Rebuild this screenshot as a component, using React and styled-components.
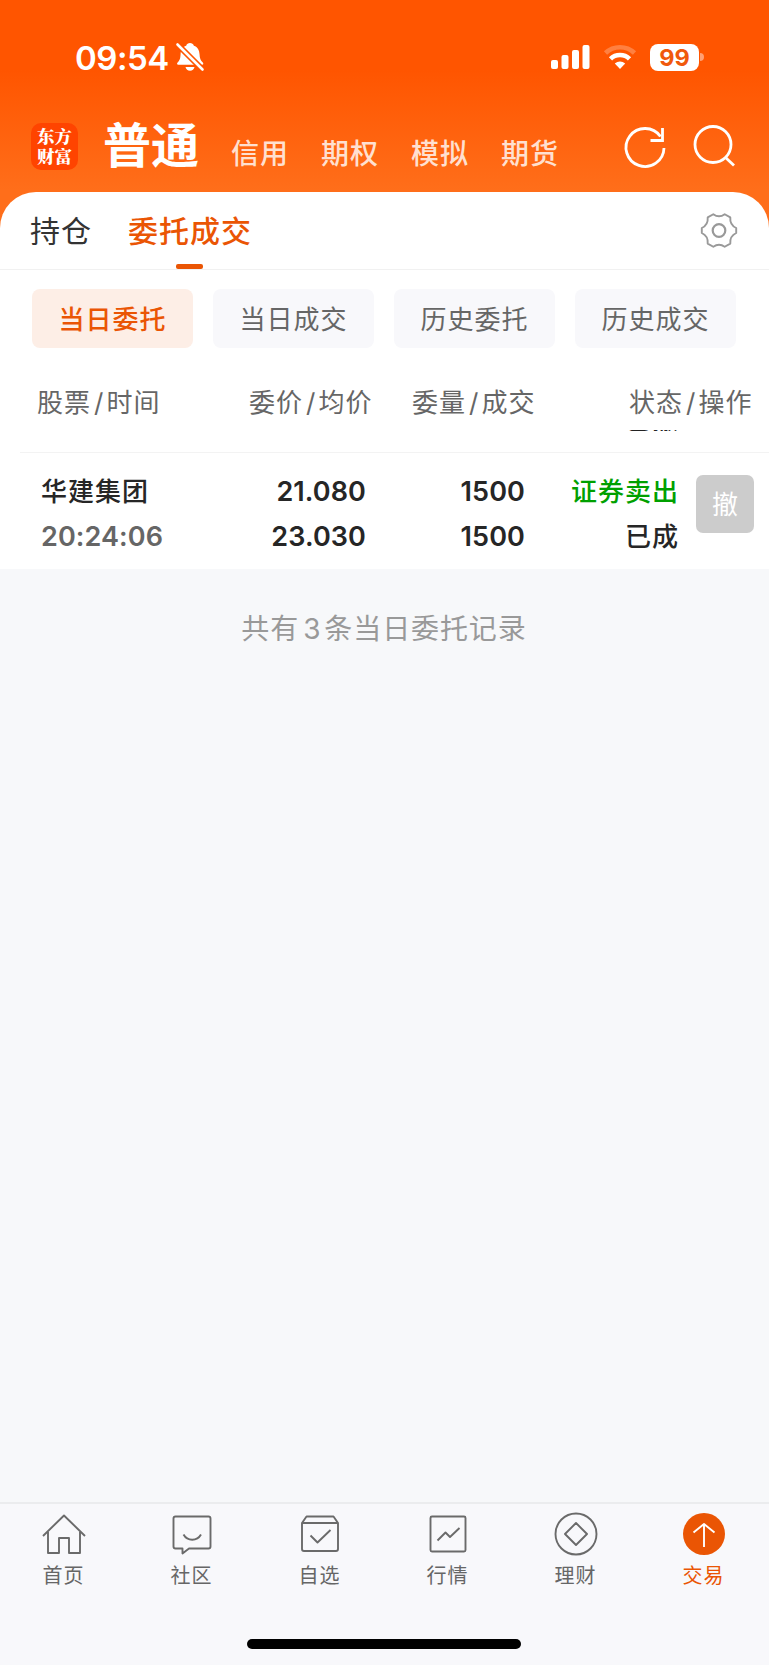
import React from 'react';
import styled, { createGlobalStyle } from 'styled-components';

// Global styles
const GlobalStyle = createGlobalStyle`
  * {
    box-sizing: border-box;
  }
  body {
    margin: 0;
    background-color: #f7f8fa;
    font-family: Inter, 'Noto Sans CJK SC', sans-serif;
  }
  svg {
    display: block;
    overflow: visible;
  }
`;

// Styled components
const Screen = styled.div`
  width: 769px;
  height: 1665px;
  display: flex;
  flex-direction: column;
  overflow: hidden;
  background: #f7f8fa;
`;

const Hero = styled.header`
  height: 240px;
  flex: none;
  background: linear-gradient(#ff5500 0, #ff5500 70px, #ff6e1a 190px);
  color: #fff;
`;

const StatusBar = styled.div`
  height: 114px;
  padding: 0 65px 0 75px;
  display: flex;
  align-items: center;
`;

const Time = styled.span`
  font-size: 33px;
  font-weight: 600;
  line-height: 40px;
  letter-spacing: -0.5px;
  width: 101px;
  padding-top: 1px;
  white-space: nowrap;
`;

const StatusRight = styled.div`
  margin-left: auto;
  display: flex;
  align-items: center;
  gap: 13px;
`;

const Battery = styled.div`
  width: 49px;
  height: 27px;
  border-radius: 8px;
  background: #fff;
  color: #f0590c;
  font-size: 23.5px;
  font-weight: 650;
  line-height: 27px;
  text-align: center;
`;

const BatteryWrap = styled.div`
  display: flex;
  align-items: center;
  gap: 1px;
`;

const BatteryNub = styled.div`
  width: 4px;
  height: 8px;
  border-radius: 0 4px 4px 0;
  background: #ffa074;
`;

const AccountBar = styled.nav`
  height: 78px;
  padding: 0 31px;
  display: flex;
  align-items: flex-start;
`;

const Logo = styled.div`
  width: 47px;
  height: 47px;
  margin: 9px 25px 0 0;
  padding-top: 3px;
  border-radius: 10px;
  background: #ff4400;
  font-family: 'Noto Serif CJK SC', 'Noto Sans CJK SC', serif;
  font-size: 17.5px;
  font-weight: 900;
  line-height: 20px;
  text-align: center;
`;

const AccountTitle = styled.span`
  font-size: 48px;
  font-weight: 700;
  line-height: 60px;
  margin: 2px 32px 0 0;
`;

const AccountTab = styled.span`
  width: 90px;
  margin-top: 20px;
  font-size: 28px;
  font-weight: 500;
  line-height: 40px;
  letter-spacing: 1px;
  color: #ffe0d0;
`;

const HeaderIcons = styled.div`
  margin: 8px 2px 0 auto;
  display: flex;
  gap: 25px;
`;

const Sheet = styled.main`
  flex: none;
  margin-top: -48px;
  background: #fff;
  border-radius: 36px 36px 0 0;
`;

const TabRow = styled.div`
  height: 78px;
  padding: 0 31px 0 30px;
  display: flex;
  align-items: stretch;
  gap: 36px;
  border-bottom: 1px solid #f1f1f1;
`;

const Tab = styled.div`
  display: flex;
  flex-direction: column;
  align-items: center;
  justify-content: space-between;
  padding-top: 18px;
  font-size: 30px;
  line-height: 42px;
  letter-spacing: 1px;
  font-weight: ${props => (props.$active ? 500 : 400)};
  color: ${props => (props.$active ? '#ea5504' : '#333')};
`;

const TabMark = styled.div`
  width: 27px;
  height: 5px;
  margin-right: 1px;
  border-radius: 2px;
  background: #ea5504;
`;

const Settings = styled.div`
  margin: 20px 0 0 auto;
`;

const FilterRow = styled.div`
  padding: 19px 33px 0 32px;
  display: grid;
  grid-template-columns: repeat(4, 1fr);
  gap: 20px;
`;

const Filter = styled.div`
  height: 59px;
  border-radius: 8px;
  font-size: 26px;
  line-height: 61px;
  letter-spacing: 1px;
  text-align: center;
  font-weight: ${props => (props.$active ? 500 : 400)};
  color: ${props => (props.$active ? '#ea5504' : '#666')};
  background: ${props => (props.$active ? '#fdeee6' : '#f8f8fb')};
`;

const TableHead = styled.div`
  height: 81px;
  padding: 35px 17px 0 37px;
  display: grid;
  grid-template-columns: 212px 163px 217px 1fr;
  font-size: 26px;
  line-height: 40px;
  letter-spacing: 1px;
  color: #666;
  white-space: nowrap;
`;

const Slash = styled.span`
  margin: 0 2px 0 3px;
`;

// Only the bottom edge of the previous order is still visible
const ScrolledRow = styled.div`
  height: 24px;
  margin-left: 20px;
  padding: 1px 90px 0 0;
  border-bottom: 1px solid #f3f3f3;
`;

const ScrolledStatus = styled.div`
  height: 1px;
  display: flex;
  justify-content: flex-end;
  align-items: flex-end;
  overflow: hidden;
  font-size: 26px;
  font-weight: 500;
  line-height: 22px;
  letter-spacing: 1px;
  color: #222;
`;

const OrderRow = styled.div`
  height: 116px;
  padding: 16px 15px 0 41px;
  display: grid;
  grid-template-columns: 160px 165px 159px 154px 1fr;
`;

const Cell = styled.div`
  display: flex;
  flex-direction: column;
  text-align: ${props => props.$align || 'right'};
  font-size: 27px;
  font-weight: 600;
  line-height: 45px;
  letter-spacing: 0.1px;
  color: #262626;
  white-space: nowrap;
`;

const Cn = styled.span`
  font-size: 26px;
  font-weight: 500;
  letter-spacing: 1px;
  color: ${props => props.$color || '#262626'};
`;

const OrderTime = styled.span`
  font-weight: 600;
  letter-spacing: 0.1px;
  color: #666;
`;

const CancelButton = styled.button`
  width: 58px;
  height: 58px;
  margin: 6px 0 0 auto;
  padding: 2px 0 0;
  border: none;
  border-radius: 7px;
  background: #ccc;
  color: #fff;
  font-family: inherit;
  font-size: 26px;
  line-height: 56px;
`;

const Summary = styled.p`
  flex: 1;
  margin: 0;
  padding: 39px 1px 0 0;
  font-size: 28px;
  line-height: 42px;
  letter-spacing: 0.9px;
  text-align: center;
  color: #999;
`;

const Count = styled.span`
  margin: 0 3px 0 4px;
`;

const BottomNav = styled.nav`
  height: 163px;
  flex: none;
  display: flex;
  flex-direction: column;
  align-items: center;
  justify-content: space-between;
  padding-bottom: 16px;
  border-top: 2px solid #ebecee;
  background: #f8f8fb;
`;

const NavItems = styled.div`
  width: 100%;
  display: grid;
  grid-template-columns: repeat(6, 128px);
`;

const NavItem = styled.div`
  display: flex;
  flex-direction: column;
  align-items: center;
  padding-top: 8px;
  font-size: 20px;
  line-height: 30px;
  letter-spacing: 1px;
  color: ${props => (props.$active ? '#ea5504' : '#666')};
`;

const NavLabel = styled.span`
  margin: 5px 1px 0 0;
`;

const HomeIndicator = styled.div`
  width: 274px;
  height: 10px;
  margin-right: 1px;
  border-radius: 5px;
  background: #000;
`;

// Icons
const BellOff = () => (
  <svg width="28" height="30" viewBox="0 0 28 30">
    <path d="M14 1c1.800 0 3.300 1 3.900 2.700C21.800 5 23.300 8.300 23.500 12c.2 4.500 1.200 6.600 3.300 8.500.8.800.7 2.200-.6 2.200H2.300c-1.400 0-1.600-1.300-.7-2.200C3.700 18.500 4.400 16.500 4.600 12 4.800 8 6.500 4.900 10.200 3.700 10.700 2 12.200 1 14 1z" fill="#fff" />
    <path d="M9.500 25h9c-.5 2.300-2.200 3.700-4.500 3.700S10 27.300 9.500 25z" fill="#fff" />
    <path d="M2 3 26.500 27.500" stroke="#ff5500" strokeWidth="6" />
    <path d="M1.500 2.500 26.500 27.500" stroke="#fff" strokeWidth="2.600" strokeLinecap="round" />
  </svg>
);

const Signal = () => (
  <svg width="39" height="26" viewBox="0 0 39 26" fill="#fff">
    <rect x="0" y="16" width="7" height="9" rx="2" />
    <rect x="10.500" y="11" width="7" height="14" rx="2" />
    <rect x="21" y="6" width="7" height="19" rx="2" />
    <rect x="31.500" y="1" width="7" height="24" rx="2" />
  </svg>
);

const Wifi = () => (
  <svg width="34" height="26" viewBox="0 0 34 26" fill="none">
    <path d="M2.500 9C10.500 1.300 23.500 1.300 31.500 9" stroke="#ff8040" strokeWidth="4.600" />
    <path d="M7.500 14.800c5.200-5 13.800-5 19 0" stroke="#fff" strokeWidth="4.600" />
    <path d="M11.800 19.600c3-2.700 7.400-2.700 10.400 0L17 25z" fill="#fff" />
  </svg>
);

const Refresh = () => (
  <svg width="44" height="44" viewBox="0 0 44 44" fill="none" stroke="#fff" strokeWidth="2.800">
    <path d="M41 26A19 19 0 1 1 37.500 14.500" />
    <path d="M39.500 6v12.500H27.500" />
  </svg>
);

const Search = () => (
  <svg width="44" height="44" viewBox="0 0 44 44" fill="none" stroke="#fff" strokeWidth="2.800">
    <circle cx="21" cy="22.500" r="18" />
    <path d="M33 35 42 43.500" />
  </svg>
);

const Gear = () => (
  <svg width="38" height="38" viewBox="0 0 38 38" fill="none" stroke="#999" strokeWidth="1.900" strokeLinejoin="round">
    <path d="M13.300 2.200Q19 6.400 24.700 2.200L30.300 5.400C29.800 11 31.500 13.800 36.200 16V21C31.500 23.200 29.800 26 30.300 31.600L24.700 34.800Q19 30.600 13.300 34.800L7.700 31.600C8.200 26 6.500 23.200 1.800 21V16C6.500 13.800 8.200 11 7.700 5.400Z" />
    <circle cx="19" cy="18.500" r="6.300" strokeWidth="2.200" />
  </svg>
);

const NAV_ICONS = {
  home: (
    <>
      <path d="M2 24 23 3.500 44 24" />
      <path d="M7 20v21h11V26h10v15h11V20" />
    </>
  ),
  community: (
    <>
      <path d="M6.500 4.500h33q2 0 2 2v28q0 2-2 2H20l-6.500 5v-5h-7q-2 0-2-2v-28q0-2 2-2z" />
      <path d="M14.500 22.500c4 7 13.500 7 17.500 0" />
    </>
  ),
  picks: (
    <>
      <path d="M5 11 9.500 4.500h27L41 11v26q0 2-2 2H7q-2 0-2-2zM5 11h36" />
      <path d="M13.500 23.500 20.500 30.500 33.500 18" />
    </>
  ),
  market: (
    <>
      <rect x="5.500" y="4.500" width="35" height="35" rx="1.500" />
      <path d="m12.500 28.500 8-8 4.500 4.500 9.500-9" />
    </>
  ),
  wealth: (
    <>
      <circle cx="23" cy="22" r="20.500" />
      <path d="M23 11 34 22 23 33 12 22z" />
    </>
  ),
  trade: (
    <>
      <circle cx="23" cy="22" r="21" fill="#ea5504" stroke="none" />
      <path d="M23 35V12M12.500 20.500 23 12 33.500 20.500" stroke="#fff" />
    </>
  ),
};

const NavIcon = ({ name }) => (
  <svg width="46" height="44" viewBox="0 0 46 44" fill="none" stroke="#6a6a6a" strokeWidth="1.900" strokeLinejoin="round">
    {NAV_ICONS[name]}
  </svg>
);

const accounts = ['信用', '期权', '模拟', '期货'];
const filters = ['当日委托', '当日成交', '历史委托', '历史成交'];
const columns = [
  ['股票', '时间'],
  ['委价', '均价'],
  ['委量', '成交'],
  ['状态', '操作'],
];
const navItems = [
  { icon: 'home', label: '首页' },
  { icon: 'community', label: '社区' },
  { icon: 'picks', label: '自选' },
  { icon: 'market', label: '行情' },
  { icon: 'wealth', label: '理财' },
  { icon: 'trade', label: '交易' },
];

// Main component
const App = () => (
  <>
    <GlobalStyle />
    <Screen>
      <Hero>
        <StatusBar>
          <Time>09:54</Time>
          <BellOff />
          <StatusRight>
            <Signal />
            <Wifi />
            <BatteryWrap>
              <Battery>99</Battery>
              <BatteryNub />
            </BatteryWrap>
          </StatusRight>
        </StatusBar>
        <AccountBar>
          <Logo>东方<br />财富</Logo>
          <AccountTitle>普通</AccountTitle>
          {accounts.map(name => (
            <AccountTab key={name}>{name}</AccountTab>
          ))}
          <HeaderIcons>
            <Refresh />
            <Search />
          </HeaderIcons>
        </AccountBar>
      </Hero>
      <Sheet>
        <TabRow>
          <Tab>持仓</Tab>
          <Tab $active>
            委托成交
            <TabMark />
          </Tab>
          <Settings>
            <Gear />
          </Settings>
        </TabRow>
        <FilterRow>
          {filters.map((name, index) => (
            <Filter key={name} $active={index === 0}>{name}</Filter>
          ))}
        </FilterRow>
        <TableHead>
          {columns.map(([first, second]) => (
            <span key={first}>{first}<Slash>/</Slash>{second}</span>
          ))}
        </TableHead>
        <ScrolledRow>
          <ScrolledStatus>已撤</ScrolledStatus>
        </ScrolledRow>
        <OrderRow>
          <Cell $align="left">
            <Cn>华建集团</Cn>
            <OrderTime>20:24:06</OrderTime>
          </Cell>
          <Cell>
            <span>21.080</span>
            <span>23.030</span>
          </Cell>
          <Cell>
            <span>1500</span>
            <span>1500</span>
          </Cell>
          <Cell>
            <Cn $color="#00a000">证券卖出</Cn>
            <Cn>已成</Cn>
          </Cell>
          <CancelButton>撤</CancelButton>
        </OrderRow>
      </Sheet>
      <Summary>
        共有<Count>3</Count>条当日委托记录
      </Summary>
      <BottomNav>
        <NavItems>
          {navItems.map(item => (
            <NavItem key={item.icon} $active={item.icon === 'trade'}>
              <NavIcon name={item.icon} />
              <NavLabel>{item.label}</NavLabel>
            </NavItem>
          ))}
        </NavItems>
        <HomeIndicator />
      </BottomNav>
    </Screen>
  </>
);

export default App;
